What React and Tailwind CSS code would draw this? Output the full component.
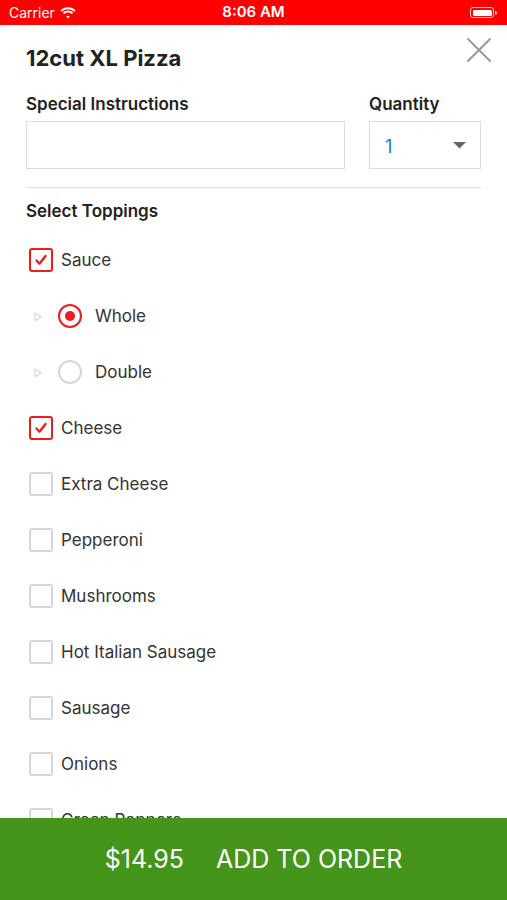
import React from "react";

const toppings = [
  { name: "Sauce", checked: true },
  { name: "Whole", radio: true, selected: true },
  { name: "Double", radio: true, selected: false },
  { name: "Cheese", checked: true },
  { name: "Extra Cheese" },
  { name: "Pepperoni" },
  { name: "Mushrooms" },
  { name: "Hot Italian Sausage" },
  { name: "Sausage" },
  { name: "Onions" },
  { name: "Green Peppers" },
  { name: "Black Olives" },
];

const StatusBar = () => (
  <div className="h-[25px] bg-[#ff0000] flex items-center justify-between px-[9px] text-white relative shrink-0">
    <div className="flex items-center gap-[5px]">
      <span className="text-[14px]">Carrier</span>
      <svg width="16" height="12" viewBox="0 0 16 12" fill="white">
        <path d="M8 2.2c2.4 0 4.6.9 6.2 2.5l1.3-1.4C13.5 1.3 10.9.2 8 .2S2.5 1.3.5 3.3l1.3 1.4C3.4 3.1 5.6 2.2 8 2.2z" />
        <path d="M8 5.6c1.5 0 2.8.6 3.8 1.5l1.3-1.4C11.8 4.4 10 3.6 8 3.6s-3.8.8-5.1 2.1l1.3 1.4c1-.9 2.3-1.5 3.8-1.5z" />
        <path d="M8 8.8c.7 0 1.3.3 1.7.7L8 11.5 6.3 9.5c.4-.4 1-.7 1.7-.7z" />
      </svg>
    </div>
    <span className="absolute left-1/2 -translate-x-1/2 text-[15px] font-semibold">8:06 AM</span>
    <div className="flex items-center mr-[1px]">
      <div className="w-[24px] h-[11px] rounded-[3px] border border-white/80 p-[1.5px]">
        <div className="w-full h-full bg-white rounded-[1.5px]" />
      </div>
      <div className="w-[2px] h-[4px] bg-white/80 rounded-r-sm ml-[1px]" />
    </div>
  </div>
);

const CheckBox = ({ checked }) =>
  checked ? (
    <div className="w-[24px] h-[24px] border-2 border-[#ee1c1c] rounded-[3px] flex items-center justify-center">
      <svg width="14" height="14" viewBox="0 0 14 14">
        <path d="M2.5 7.5l3 3.2L11.5 3" stroke="#ee1c1c" strokeWidth="2.4" fill="none" strokeLinecap="round" strokeLinejoin="round" />
      </svg>
    </div>
  ) : (
    <div className="w-[24px] h-[24px] border-2 border-[#d6d6d6] rounded-[3px]" />
  );

const Radio = ({ selected }) =>
  selected ? (
    <div className="w-[24px] h-[24px] rounded-full border-[2.5px] border-[#ee1c1c] flex items-center justify-center">
      <div className="w-[10px] h-[10px] rounded-full bg-[#ee1c1c]" />
    </div>
  ) : (
    <div className="w-[24px] h-[24px] rounded-full border-2 border-[#d6d6d6]" />
  );

const ToppingRow = ({ item }) => {
  if (item.radio) {
    return (
      <div className="h-[56px] flex items-center">
        <svg width="8" height="10" viewBox="0 0 8 10" className="ml-[34px] mt-[2px]">
          <path d="M1 1l6 4-6 4z" fill="none" stroke="#c8c8c8" strokeWidth="1" />
        </svg>
        <div className="ml-[16px]">
          <Radio selected={item.selected} />
        </div>
        <span className="ml-[13px] pt-[2px] text-[17px] text-[#333]">{item.name}</span>
      </div>
    );
  }
  return (
    <div className="h-[56px] flex items-center pl-[29px]">
      <CheckBox checked={item.checked} />
      <span className="ml-[8px] pt-[2px] text-[17px] text-[#333]">{item.name}</span>
    </div>
  );
};

export default function App() {
  return (
    <div className="h-[900px] w-full flex flex-col bg-white overflow-hidden" style={{ fontFamily: "Inter, 'Noto Sans', sans-serif" }}>
      <StatusBar />
      <div className="flex-1 overflow-hidden">
        <div className="px-[26px] pt-[19px]">
          <div className="flex items-start justify-between">
            <h1 className="text-[22px] leading-[28px] font-bold text-[#222]">12cut XL Pizza</h1>
            <svg width="26" height="26" viewBox="0 0 26 26" className="-mt-[7px] -mr-[11px]">
              <path d="M2 2l22 22M24 2L2 24" stroke="#999" strokeWidth="2" strokeLinecap="round" />
            </svg>
          </div>
          <div className="grid grid-cols-[319px_1fr] gap-x-[24px] mt-[22px]">
            <div className="text-[17px] leading-[20px] font-semibold text-[#222]">Special Instructions</div>
            <div className="text-[17px] leading-[20px] font-semibold text-[#222]">Quantity</div>
            <div className="mt-[7px] h-[48px] border border-[#dcdcdc]" />
            <div className="mt-[7px] h-[48px] border border-[#dcdcdc] flex items-center justify-between pl-[15px] pr-[14px]">
              <span className="text-[18px] text-[#1a7ae0] mt-[3px]">1</span>
              <svg width="13" height="7" viewBox="0 0 13 7">
                <path d="M0 0h13L6.5 6.5z" fill="#666" />
              </svg>
            </div>
          </div>
          <div className="mt-[18px] h-px bg-[#dcdcdc]" />
          <div className="mt-[13px] text-[17px] leading-[20px] font-semibold text-[#222]">Select Toppings</div>
        </div>
        <div className="mt-[11px]">
          {toppings.map((t) => (
            <ToppingRow key={t.name} item={t} />
          ))}
        </div>
      </div>
      <button className="h-[82px] shrink-0 w-full bg-[#45951a] flex items-center justify-center gap-[32px] text-white text-[25px] pt-[2px]">
        <span>$14.95</span>
        <span>ADD TO ORDER</span>
      </button>
    </div>
  );
}
